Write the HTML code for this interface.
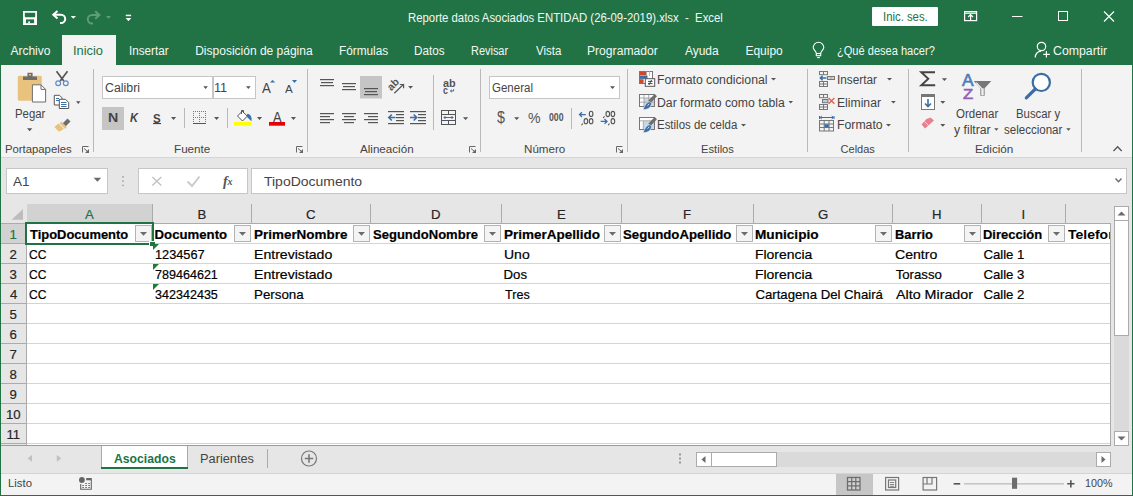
<!DOCTYPE html>
<html><head><meta charset="utf-8"><style>
html,body{margin:0;padding:0;width:1133px;height:496px;overflow:hidden;background:#fff;}
body{position:relative;font-family:"Liberation Sans",sans-serif;}
.a{position:absolute;box-sizing:border-box;}
.t{position:absolute;white-space:pre;transform-origin:0 0;}
.s{-webkit-text-stroke:0.2px currentColor;}
svg{position:absolute;overflow:visible;}
</style></head><body>
<!-- backgrounds -->
<div class="a" style="left:0;top:0;width:1133px;height:65px;background:#217346"></div>
<div class="a" style="left:62px;top:35px;width:54px;height:30px;background:#f3f3f3"></div>
<div class="a" style="left:0;top:65px;width:1133px;height:92px;background:#f3f3f3"></div>
<div class="a" style="left:0;top:157px;width:1133px;height:1px;background:#d5d5d5"></div>
<div class="a" style="left:0;top:158px;width:1133px;height:287px;background:#e6e6e6"></div>
<!-- formula bar boxes -->
<div class="a" style="left:6px;top:168px;width:102px;height:26px;background:#fff;border:1px solid #c6c6c6"></div>
<div class="a" style="left:138px;top:168px;width:110px;height:26px;background:#fff;border:1px solid #c6c6c6"></div>
<div class="a" style="left:251px;top:168px;width:876px;height:26px;background:#fff;border:1px solid #c6c6c6"></div>
<!-- grid -->
<div class="a" style="left:27px;top:224px;width:1083px;height:220px;background:#fff"></div>
<!-- sheet tabs + status -->
<div class="a" style="left:0;top:444px;width:1111px;height:1px;background:#9b9b9b"></div>
<div class="a" style="left:0;top:473px;width:1133px;height:22px;background:#f3f3f3"></div>
<div class="a" style="left:0;top:473px;width:1133px;height:1px;background:#d4d4d4"></div>
<svg style="left:0;top:0" width="1133" height="496" viewBox="0 0 1133 496">
<!-- ===== title bar ===== -->
<rect x="23" y="11" width="14" height="14" fill="#fff"/>
<path d="M24.8 12.8 H35.2 V16.6 L34.6 17.2 H25.4 L24.8 16.6 Z" fill="#217346"/>
<rect x="25.9" y="19.4" width="8.2" height="3.8" fill="#217346"/>
<rect x="28.2" y="21.4" width="1.8" height="1.8" fill="#fff"/>
<!-- undo -->
<g fill="none" stroke="#fff" stroke-width="2">
  <path d="M53 14.7 H61 A4.2 4.2 0 0 1 61 23.1 H60"/>
  <path d="M57.5 11 L53.3 14.7 L57.5 18.4" stroke-linejoin="miter"/>
</g>
<path d="M70.7 16 H76 L73.35 18.8 Z" fill="#fff"/>
<!-- redo faded -->
<g fill="none" stroke="#5d9e77" stroke-width="2">
  <path d="M99.5 15 H92 A4.2 4.2 0 0 0 92 23.4 H93"/>
  <path d="M95.2 11.3 L99.4 15 L95.2 18.7"/>
</g>
<path d="M106 16 H111 L108.5 18.8 Z" fill="#5d9e77"/>
<!-- customize -->
<rect x="125.8" y="14.7" width="5.3" height="1.5" fill="#fff"/>
<path d="M125.6 18 H131.3 L128.45 21.2 Z" fill="#fff"/>
<!-- sign in box -->
<rect x="872" y="7" width="66" height="19" rx="1" fill="#fff"/>
<!-- ribbon display options -->
<g fill="none" stroke="#fff" stroke-width="1.2">
  <rect x="964.6" y="11.6" width="12" height="9"/>
  <path d="M964.6 13.2 H976.6"/>
  <path d="M970.6 20.5 V14.8 M968.2 17 L970.6 14.6 L973 17"/>
</g>
<path d="M1012 16.5 H1022.5" stroke="#fff" stroke-width="1"/>
<rect x="1058.5" y="11.5" width="9" height="9" fill="none" stroke="#fff" stroke-width="1"/>
<path d="M1104 11.5 L1114 21.5 M1114 11.5 L1104 21.5" stroke="#fff" stroke-width="1.1"/>
<!-- lightbulb -->
<g fill="none" stroke="#fff" stroke-width="1.1">
  <path d="M816.3 53.2 C816 50.8 813.2 49.8 813.2 47.6 A5.3 5.3 0 0 1 823.8 47.6 C823.8 49.8 821 50.8 820.7 53.2"/>
  <rect x="816.3" y="53.5" width="4.4" height="2.2"/>
  <path d="M817.2 57.6 H819.8"/>
</g>
<!-- person -->
<g fill="none" stroke="#fff" stroke-width="1.2">
  <circle cx="1041.5" cy="46.5" r="4.2"/>
  <path d="M1035.2 57.5 C1035.5 53.5 1038 51.5 1041 51.2"/>
  <path d="M1046.4 51 V57.5 M1043.2 54.3 H1049.8"/>
</g>
<!-- formula bar extras -->
<path d="M93.6 177.8 H101.2 L97.4 181.8 Z" fill="#6b6b6b"/>
<g fill="#a6a6a6"><rect x="122.2" y="176" width="1.6" height="1.6"/><rect x="122.2" y="180.3" width="1.6" height="1.6"/><rect x="122.2" y="184.6" width="1.6" height="1.6"/></g>
<path d="M152.3 177 L161.3 185.5 M161.3 177 L152.3 185.5" stroke="#c0c0c0" stroke-width="1.3"/>
<path d="M187.5 181.5 L192 186 L199.5 176.5" fill="none" stroke="#cbcbcb" stroke-width="2"/>
<text x="223" y="185.6" font-family="Liberation Serif" font-style="italic" font-weight="bold" font-size="14" fill="#555">f</text>
<text x="227.6" y="185.4" font-family="Liberation Serif" font-style="italic" font-weight="bold" font-size="10" fill="#555">x</text>
<path d="M1115.5 178.5 L1118.5 181.8 L1121.5 178.5" fill="none" stroke="#6b6b6b" stroke-width="1.4"/>
<!-- ===== ribbon: clipboard ===== -->
<rect x="102.5" y="76.5" width="110" height="22" fill="#fff" stroke="#c6c6c6"/>
<rect x="213.5" y="76.5" width="42" height="22" fill="#fff" stroke="#c6c6c6"/>
<rect x="489.5" y="76.5" width="130" height="22" fill="#fff" stroke="#c6c6c6"/>

<rect x="17.8" y="75.8" width="24" height="25" rx="1.5" fill="#e9c37e"/>
<path d="M23 76.5 H37 V80 H23 Z M27.5 72.8 H32.6 V76.6 H27.5 Z" fill="#6d6d6d"/>
<rect x="29" y="74" width="2" height="1.5" fill="#e9c37e"/>
<path d="M32.4 84.8 H41 L45.6 89.4 V102 H32.4 Z" fill="#fff" stroke="#6d6d6d" stroke-width="1"/>
<path d="M41 84.8 V89.4 H45.6" fill="none" stroke="#6d6d6d" stroke-width="1"/>
<!-- scissors -->
<g fill="none" stroke="#555" stroke-width="1.7">
  <path d="M56.5 71.3 L63.8 81 M67.5 71.3 L60.2 81"/>
</g>
<g fill="none" stroke="#5b8ccb" stroke-width="1.2">
  <circle cx="58.2" cy="83.2" r="2.4"/>
  <circle cx="65.8" cy="83.2" r="2.4"/>
</g>
<!-- copy -->
<g fill="#fff" stroke="#555" stroke-width="1">
  <path d="M54.3 95.3 H59.5 L62 97.8 V105 H54.3 Z"/>
  <path d="M59.3 99.3 H65.5 L68.7 102.5 V108.5 H59.3 Z"/>
</g>
<g stroke="#3c6ea5" stroke-width="1">
  <path d="M61 102.5 H66.5 M61 104.5 H66.5 M61 106.5 H66.5"/>
  <path d="M56 98.5 H59 M56 100.5 H59"/>
</g>
<!-- format painter -->
<path d="M62.5 123.5 L67.5 118.5 L70.5 121.5 L65.5 126.5 Z" fill="#6d6d6d"/>
<path d="M58.5 123.5 L64 129 L59 131.8 L54.3 127 Z" fill="#e9c37e"/>
<path d="M60.5 122.5 L66 128" stroke="#e9c37e" stroke-width="2.5"/>
<!-- dropdown triangles (ribbon) -->
<g fill="#555">
  <path d="M27 128.3 H32.3 L29.65 131.2 Z"/>
  <path d="M76 101.3 H80.5 L78.25 104 Z"/>
  <path d="M203.3 86.3 H207.9 L205.6 89 Z"/>
  <path d="M246 86.3 H250.7 L248.35 89 Z"/>
  <path d="M171 117 H176.1 L173.55 119.9 Z"/>
  <path d="M214.1 116.9 H219.1 L216.6 119.9 Z"/>
  <path d="M257 116.9 H262.1 L259.55 119.9 Z"/>
  <path d="M290.9 116.9 H296 L293.45 119.9 Z"/>
  <path d="M408.1 86 H413 L410.55 88.8 Z"/>
  <path d="M463 117.2 H468.2 L465.6 120 Z"/>
  <path d="M610 86.3 H615 L612.5 89 Z"/>
  <path d="M514.1 117.2 H519.3 L516.7 120.1 Z"/>
  <path d="M771 78 H776 L773.5 80.6 Z"/>
  <path d="M788.5 101 H793 L790.75 103.6 Z"/>
  <path d="M741 124 H746 L743.5 126.6 Z"/>
  <path d="M887 78 H892 L889.5 80.6 Z"/>
  <path d="M891 101 H895.8 L893.4 103.6 Z"/>
  <path d="M886 124 H891 L888.5 126.6 Z"/>
  <path d="M941.9 78.2 H947 L944.45 81.1 Z"/>
  <path d="M940.3 101 H945.3 L942.8 103.7 Z"/>
  <path d="M940.3 124 H945.3 L942.8 126.7 Z"/>
  <path d="M994.2 128.3 H998.5 L996.35 130.8 Z"/>
  <path d="M1066.2 128.3 H1070.7 L1068.45 130.8 Z"/>
</g>
<!-- group separators -->
<g fill="#b9b9b9">
  <rect x="93" y="69" width="1" height="83"/>
  <rect x="307" y="69" width="1" height="83"/>
  <rect x="480" y="69" width="1" height="83"/>
  <rect x="627" y="69" width="1" height="83"/>
  <rect x="807" y="69" width="1" height="83"/>
  <rect x="908" y="69" width="1" height="83"/>
  <rect x="1081" y="69" width="1" height="83"/>
  <rect x="184" y="108" width="1" height="20"/>
  <rect x="227" y="108" width="1" height="20"/>
  <rect x="433" y="75" width="1" height="55"/>
  <rect x="571" y="108" width="1" height="21"/>
</g>
<!-- dialog launchers -->
<path d="M82.5 152.5 V146.5 H88.5" fill="none" stroke="#666" stroke-width="1"/>
<path d="M84.0 148.5 L87.0 151" stroke="#666" stroke-width="1"/>
<path d="M89.0 149 V153 H85.0 Z" fill="#666"/>
<path d="M296.5 152.5 V146.5 H302.5" fill="none" stroke="#666" stroke-width="1"/>
<path d="M298.0 148.5 L301.0 151" stroke="#666" stroke-width="1"/>
<path d="M303.0 149 V153 H299.0 Z" fill="#666"/>
<path d="M469.5 152.5 V146.5 H475.5" fill="none" stroke="#666" stroke-width="1"/>
<path d="M471.0 148.5 L474.0 151" stroke="#666" stroke-width="1"/>
<path d="M476.0 149 V153 H472.0 Z" fill="#666"/>
<path d="M616.5 152.5 V146.5 H622.5" fill="none" stroke="#666" stroke-width="1"/>
<path d="M618.0 148.5 L621.0 151" stroke="#666" stroke-width="1"/>
<path d="M623.0 149 V153 H619.0 Z" fill="#666"/>
<path d="M1113.5 151 L1117.6 146.8 L1121.7 151" fill="none" stroke="#555" stroke-width="1.3"/>
<!-- ===== font group ===== -->
<rect x="102" y="107" width="22" height="23" fill="#c5c5c5"/>
<path d="M269.9 82.6 L272.55 80 L275.2 82.6 Z" fill="#3c6ea5"/>
<path d="M292 80 H297 L294.5 82.9 Z" fill="#3c6ea5"/>
<!-- borders icon -->
<g fill="#777">
  <path d="M193 111 h1 v1 h-1z M195 111 h1 v1 h-1z M197 111 h1 v1 h-1z M199 111 h1 v1 h-1z M201 111 h1 v1 h-1z M203 111 h1 v1 h-1z M205 111 h1 v1 h-1z"/>
  <path d="M193 117 h1 v1 h-1z M195 117 h1 v1 h-1z M197 117 h1 v1 h-1z M199 117 h1 v1 h-1z M201 117 h1 v1 h-1z M203 117 h1 v1 h-1z M205 117 h1 v1 h-1z"/>
  <path d="M193 113 h1 v1 h-1z M193 115 h1 v1 h-1z M193 119 h1 v1 h-1z M193 121 h1 v1 h-1z"/>
  <path d="M199 113 h1 v1 h-1z M199 115 h1 v1 h-1z M199 119 h1 v1 h-1z M199 121 h1 v1 h-1z"/>
  <path d="M205 113 h1 v1 h-1z M205 115 h1 v1 h-1z M205 119 h1 v1 h-1z M205 121 h1 v1 h-1z"/>
</g>
<rect x="193" y="123" width="13" height="1" fill="#555"/>
<rect x="153" y="123" width="8" height="1.1" fill="#444"/>
<!-- fill color -->
<path d="M237.5 116 L242.3 111.2 L247.3 116.2 L242.5 121 Z" fill="#fff" stroke="#555" stroke-width="1"/>
<path d="M241.5 114 V110.5 H243.5 V113" fill="none" stroke="#555" stroke-width="1"/>
<path d="M247.3 113.8 C250.3 114 252.2 117 251.4 121.2 L246.8 116.8 Z" fill="#3c6ea5"/>
<rect x="234" y="122" width="17.2" height="3.7" fill="#ffff00"/>
<rect x="269" y="122" width="16" height="3.7" fill="#e60000"/>
<!-- ===== alignment ===== -->
<rect x="360" y="76" width="22" height="22.5" fill="#c5c5c5"/>
<g fill="#555">
  <rect x="320" y="79" width="14" height="1.2"/><rect x="321" y="82" width="12" height="1.2"/><rect x="320" y="85" width="14" height="1.2"/>
  <rect x="342" y="83" width="14" height="1.2"/><rect x="343" y="86" width="12" height="1.2"/><rect x="342" y="89" width="14" height="1.2"/>
  <rect x="364" y="88" width="14" height="1.2"/><rect x="365" y="91" width="12" height="1.2"/><rect x="364" y="94" width="14" height="1.2"/>
  <!-- left center right -->
  <rect x="320" y="113" width="14" height="1.2"/><rect x="320" y="116" width="10" height="1.2"/><rect x="320" y="119" width="14" height="1.2"/><rect x="320" y="122" width="10" height="1.2"/>
  <rect x="342" y="113" width="14" height="1.2"/><rect x="344" y="116" width="10" height="1.2"/><rect x="342" y="119" width="14" height="1.2"/><rect x="344" y="122" width="10" height="1.2"/>
  <rect x="364" y="113" width="14" height="1.2"/><rect x="368" y="116" width="10" height="1.2"/><rect x="364" y="119" width="14" height="1.2"/><rect x="368" y="122" width="10" height="1.2"/>
  <!-- indents -->
  <rect x="388" y="111" width="16" height="1.2"/><rect x="396" y="114" width="8" height="1.2"/><rect x="396" y="117" width="8" height="1.2"/><rect x="396" y="120" width="8" height="1.2"/><rect x="388" y="123" width="16" height="1.2"/>
  <rect x="410" y="111" width="16" height="1.2"/><rect x="418" y="114" width="8" height="1.2"/><rect x="418" y="117" width="8" height="1.2"/><rect x="418" y="120" width="8" height="1.2"/><rect x="410" y="123" width="16" height="1.2"/>
</g>
<g fill="none" stroke="#3c6ea5" stroke-width="1.6">
  <path d="M389 117.5 H395.5 M391.8 114.5 L388.8 117.5 L391.8 120.5"/>
  <path d="M410 117.5 H416.5 M413.7 114.5 L416.7 117.5 L413.7 120.5"/>
</g>
<!-- orientation -->
<path d="M394.3 93.3 L403.6 84.3 M399.8 84.5 H403.6 V88.3" fill="none" stroke="#555" stroke-width="1.2"/>
<text x="0" y="0" font-family="Liberation Sans" font-size="10.5" font-weight="bold" fill="#555" text-anchor="middle" transform="translate(393 84.3) rotate(-45) translate(0 3.6)">ab</text>
<path d="M453.6 89.2 V91 H450.6 M451.9 89.8 L450.4 91 L451.9 92.2" fill="none" stroke="#3c6ea5" stroke-width="1"/>
<!-- merge -->
<g fill="none" stroke="#555" stroke-width="1">
  <rect x="441.5" y="110.5" width="14" height="14"/>
  <path d="M441.5 114.5 H455.5 M441.5 120.5 H455.5 M448.5 110.5 V114.5 M448.5 120.5 V124.5"/>
</g>
<path d="M444 117.5 H453 M445.5 116 L444 117.5 L445.5 119 M451.5 116 L453 117.5 L451.5 119" fill="none" stroke="#3c6ea5" stroke-width="1"/>
<!-- ===== number ===== -->
<g fill="none" stroke="#3c6ea5" stroke-width="1.3">
  <path d="M579.5 114.6 H585.8 M582 112.3 L579.5 114.6 L582 117"/>
  <path d="M600.7 121.4 H607 M604.5 119.1 L607 121.4 L604.5 123.8"/>
</g>
<g fill="none" stroke="#555" stroke-width="1.1">
  <ellipse cx="591.1" cy="113.9" rx="1.8" ry="2.6"/>
  <ellipse cx="585.9" cy="121.2" rx="1.8" ry="2.6"/>
  <ellipse cx="591.1" cy="121.2" rx="1.8" ry="2.6"/>
  <ellipse cx="607.8" cy="114" rx="1.8" ry="2.6"/>
  <ellipse cx="612.9" cy="114" rx="1.8" ry="2.6"/>
  <ellipse cx="612.9" cy="121.2" rx="1.8" ry="2.6"/>
  <path d="M582.8 123.5 L581.5 125.3 M604.5 116.3 L603.2 118 M609.5 123.5 L608.2 125.3"/>
</g>
<!-- ===== styles ===== -->
<!-- conditional formatting -->
<g>
  <rect x="639.5" y="71.5" width="13" height="12" fill="#fff" stroke="#777" stroke-width="1"/>
  <path d="M646.5 71.5 V76 M649.5 71.5 V76" stroke="#bbb" stroke-width="1"/>
  <rect x="640" y="72" width="6.2" height="3.3" fill="#d24726"/>
  <rect x="640" y="75.6" width="7.5" height="3.3" fill="#3c6ea5"/>
  <rect x="640" y="79.2" width="3.6" height="3.8" fill="#d24726"/>
  <rect x="645.3" y="78.7" width="9.4" height="7.6" fill="#fff" stroke="#555" stroke-width="1"/>
  <path d="M648 81.4 H652.5 M648 83.6 H652.5 M651.6 80 L648.8 85" stroke="#333" stroke-width="0.9"/>
</g>
<!-- table format -->
<g>
  <rect x="639.5" y="94.5" width="15" height="12" fill="#fff" stroke="#777" stroke-width="1"/>
  <rect x="643.8" y="98.3" width="10.2" height="7.7" fill="#c9d6e5"/>
  <path d="M644 95 V106 M648.7 95 V106 M640 98 H654 M640 102.2 H654" stroke="#a8a8a8" stroke-width="1"/>
  <path d="M655.8 95.2 L649.5 101.8" stroke="#6d6d6d" stroke-width="3.2"/>
  <path d="M650.2 101.8 C648 101.6 645.5 103.5 643 109.6 C647.2 109.8 651 107.8 651.6 103.4 Z" fill="#3c6ea5" stroke="#f3f3f3" stroke-width="0.6"/>
  <path d="M647.5 105.6 L649.2 104" stroke="#fff" stroke-width="0.9"/>
</g>
<g>
  <rect x="639.5" y="117.5" width="15" height="12" fill="#fff" stroke="#777" stroke-width="1"/>
  <rect x="643.5" y="121" width="10.5" height="8" fill="#c9d6e5"/>
  <path d="M640 120.8 H654 M643.3 121 V129" stroke="#a8a8a8" stroke-width="1"/>
  <path d="M655.8 118.2 L649.5 124.8" stroke="#6d6d6d" stroke-width="3.2"/>
  <path d="M650.2 124.8 C648 124.6 645.5 126.5 643 132.6 C647.2 132.8 651 130.8 651.6 126.4 Z" fill="#3c6ea5" stroke="#f3f3f3" stroke-width="0.6"/>
  <path d="M647.5 128.6 L649.2 127" stroke="#fff" stroke-width="0.9"/>
</g>
<!-- ===== cells ===== -->
<g fill="none" stroke="#777" stroke-width="1">
  <rect x="819.5" y="71.5" width="8" height="3.2"/><path d="M823.5 71.5 V74.7"/>
  <rect x="819.5" y="81.5" width="8" height="5"/><path d="M823.5 81.5 V86.5 M819.5 84 H827.5"/>
  <rect x="827.5" y="76.5" width="7" height="3"/><path d="M831 76.5 V79.5"/>
  <rect x="819.5" y="94.5" width="8" height="3.2"/><path d="M823.5 94.5 V97.7"/>
  <rect x="819.5" y="104.5" width="8" height="5"/><path d="M823.5 104.5 V109.5 M819.5 107 H827.5"/>
  <rect x="819.5" y="120.5" width="14" height="10.5"/>
  <path d="M824.2 120.5 V131 M829 120.5 V131 M819.5 124 H833.5 M819.5 127.5 H833.5"/>
</g>
<rect x="828.2" y="77.2" width="2.5" height="1.6" fill="#c8c8c8"/><rect x="831.6" y="77.2" width="2.5" height="1.6" fill="#c8c8c8"/>
<path d="M826.5 78 H820.3 M822.6 75.7 L820.3 78 L822.6 80.3" fill="none" stroke="#3c6ea5" stroke-width="1.5"/>
<rect x="822.5" y="99.5" width="5.5" height="3.2" fill="#b9cde3" stroke="#777" stroke-width="1"/>
<path d="M828.6 98 L834.4 103.8 M834.4 98 L828.6 103.8" stroke="#e0664d" stroke-width="1.4"/>
<rect x="824.5" y="124.3" width="4.3" height="3" fill="#3c6ea5"/>
<path d="M820 117.5 H833.5 M821.8 116 L820 117.5 L821.8 119 M831.7 116 L833.5 117.5 L831.7 119 M819.5 116 V119 M834 116 V119" fill="none" stroke="#3c6ea5" stroke-width="1"/>
<!-- ===== editing ===== -->
<path d="M935 72.3 H921.3 L928.3 78.7 L921.3 85.2 H935.2" fill="none" stroke="#444" stroke-width="1.9" stroke-linejoin="miter"/>
<rect x="921.5" y="94.5" width="13" height="15" fill="#fff" stroke="#777" stroke-width="1"/>
<rect x="921" y="94" width="14" height="3" fill="#777"/>
<path d="M928 99 V106.5 M925 103.5 L928 106.5 L931 103.5" fill="none" stroke="#3c6ea5" stroke-width="1.6"/>
<path d="M926.5 119 L921.5 124.5 L925 128.5 L934 120.5 L930.5 117.5 Z" fill="#e8808f"/>
<path d="M924.5 121.5 L928.5 125.5" stroke="#f3f3f3" stroke-width="0.8"/>
<!-- sort filter -->
<path d="M973.8 81 H991.3 L984.6 88.3 V95.8 H980.4 V88.3 Z" fill="#777"/>
<path d="M976.3 82.6 L981.9 88.6 V94.6 H983.1 V88.3" fill="none" stroke="#fff" stroke-width="1.1"/>
<!-- magnifier -->
<circle cx="1041.3" cy="82.4" r="8.6" fill="#fff" stroke="#3c6ea5" stroke-width="2.2"/>
<path d="M1035.3 89 L1026.3 97.8" stroke="#3c6ea5" stroke-width="3.2" stroke-linecap="round"/>
</svg>

<!-- window border -->
<div class="a" style="left:0;top:65px;width:1px;height:431px;background:#217346"></div>
<div class="a" style="left:1132px;top:65px;width:1px;height:431px;background:#217346"></div>
<div class="a" style="left:0;top:495px;width:1133px;height:1px;background:#217346"></div>

<div class="a" style="left:1px;top:204px;width:1110px;height:19px;background:#e6e6e6;"></div>
<div class="a" style="left:27px;top:204px;width:125px;height:19px;background:#d2d2d2;"></div>
<div class="a" style="left:1px;top:223px;width:25px;height:222px;background:#e6e6e6;"></div>
<div class="a" style="left:1px;top:224px;width:25px;height:19px;background:#d2d2d2;"></div>
<div class="a" style="left:1px;top:223px;width:1110px;height:1px;background:#ababab;"></div>
<div class="a" style="left:152px;top:204px;width:1px;height:19px;background:#ababab;"></div>
<div class="a" style="left:251px;top:204px;width:1px;height:19px;background:#ababab;"></div>
<div class="a" style="left:370px;top:204px;width:1px;height:19px;background:#ababab;"></div>
<div class="a" style="left:501px;top:204px;width:1px;height:19px;background:#ababab;"></div>
<div class="a" style="left:621px;top:204px;width:1px;height:19px;background:#ababab;"></div>
<div class="a" style="left:753px;top:204px;width:1px;height:19px;background:#ababab;"></div>
<div class="a" style="left:892px;top:204px;width:1px;height:19px;background:#ababab;"></div>
<div class="a" style="left:981px;top:204px;width:1px;height:19px;background:#ababab;"></div>
<div class="a" style="left:1065px;top:204px;width:1px;height:19px;background:#ababab;"></div>
<div class="a" style="left:26px;top:223px;width:1px;height:222px;background:#ababab;"></div>
<div class="a" style="left:1px;top:243px;width:25px;height:1px;background:#ababab;"></div>
<div class="a" style="left:1px;top:263px;width:25px;height:1px;background:#ababab;"></div>
<div class="a" style="left:1px;top:283px;width:25px;height:1px;background:#ababab;"></div>
<div class="a" style="left:1px;top:303px;width:25px;height:1px;background:#ababab;"></div>
<div class="a" style="left:1px;top:323px;width:25px;height:1px;background:#ababab;"></div>
<div class="a" style="left:1px;top:343px;width:25px;height:1px;background:#ababab;"></div>
<div class="a" style="left:1px;top:363px;width:25px;height:1px;background:#ababab;"></div>
<div class="a" style="left:1px;top:383px;width:25px;height:1px;background:#ababab;"></div>
<div class="a" style="left:1px;top:403px;width:25px;height:1px;background:#ababab;"></div>
<div class="a" style="left:1px;top:423px;width:25px;height:1px;background:#ababab;"></div>
<div class="a" style="left:1px;top:443px;width:25px;height:1px;background:#ababab;"></div>
<div class="a" style="left:152px;top:224px;width:1px;height:220px;background:#d4d4d4;"></div>
<div class="a" style="left:251px;top:224px;width:1px;height:220px;background:#d4d4d4;"></div>
<div class="a" style="left:370px;top:224px;width:1px;height:220px;background:#d4d4d4;"></div>
<div class="a" style="left:501px;top:224px;width:1px;height:220px;background:#d4d4d4;"></div>
<div class="a" style="left:621px;top:224px;width:1px;height:220px;background:#d4d4d4;"></div>
<div class="a" style="left:753px;top:224px;width:1px;height:220px;background:#d4d4d4;"></div>
<div class="a" style="left:892px;top:224px;width:1px;height:220px;background:#d4d4d4;"></div>
<div class="a" style="left:981px;top:224px;width:1px;height:220px;background:#d4d4d4;"></div>
<div class="a" style="left:1065px;top:224px;width:1px;height:220px;background:#d4d4d4;"></div>
<div class="a" style="left:27px;top:224px;width:1083px;height:221px;background:#fff;"></div>
<div class="a" style="left:27px;top:243px;width:1083px;height:1px;background:#d4d4d4;"></div>
<div class="a" style="left:27px;top:263px;width:1083px;height:1px;background:#d4d4d4;"></div>
<div class="a" style="left:27px;top:283px;width:1083px;height:1px;background:#d4d4d4;"></div>
<div class="a" style="left:27px;top:303px;width:1083px;height:1px;background:#d4d4d4;"></div>
<div class="a" style="left:27px;top:323px;width:1083px;height:1px;background:#d4d4d4;"></div>
<div class="a" style="left:27px;top:343px;width:1083px;height:1px;background:#d4d4d4;"></div>
<div class="a" style="left:27px;top:363px;width:1083px;height:1px;background:#d4d4d4;"></div>
<div class="a" style="left:27px;top:383px;width:1083px;height:1px;background:#d4d4d4;"></div>
<div class="a" style="left:27px;top:403px;width:1083px;height:1px;background:#d4d4d4;"></div>
<div class="a" style="left:27px;top:423px;width:1083px;height:1px;background:#d4d4d4;"></div>
<div class="a" style="left:27px;top:443px;width:1083px;height:1px;background:#d4d4d4;"></div>
<div class="a" style="left:1110px;top:224px;width:1px;height:222px;background:#ababab;"></div>
<svg style="left:0;top:0" width="30" height="224"><path d="M11.5 219.7 L23 219.7 L23 208.9 Z" fill="#bdbdbd"/></svg>
<div class="a" style="left:135px;top:225px;width:17px;height:17px;background:#f4f4f4;border:1px solid #b3b3b3"></div>
<svg style="left:135px;top:225px" width="17" height="17"><path d="M5 7 H12 L8.5 10.7 Z" fill="#6b6b6b"/></svg>
<div class="a" style="left:234px;top:225px;width:17px;height:17px;background:#f4f4f4;border:1px solid #b3b3b3"></div>
<svg style="left:234px;top:225px" width="17" height="17"><path d="M5 7 H12 L8.5 10.7 Z" fill="#6b6b6b"/></svg>
<div class="a" style="left:353px;top:225px;width:17px;height:17px;background:#f4f4f4;border:1px solid #b3b3b3"></div>
<svg style="left:353px;top:225px" width="17" height="17"><path d="M5 7 H12 L8.5 10.7 Z" fill="#6b6b6b"/></svg>
<div class="a" style="left:484px;top:225px;width:17px;height:17px;background:#f4f4f4;border:1px solid #b3b3b3"></div>
<svg style="left:484px;top:225px" width="17" height="17"><path d="M5 7 H12 L8.5 10.7 Z" fill="#6b6b6b"/></svg>
<div class="a" style="left:604px;top:225px;width:17px;height:17px;background:#f4f4f4;border:1px solid #b3b3b3"></div>
<svg style="left:604px;top:225px" width="17" height="17"><path d="M5 7 H12 L8.5 10.7 Z" fill="#6b6b6b"/></svg>
<div class="a" style="left:736px;top:225px;width:17px;height:17px;background:#f4f4f4;border:1px solid #b3b3b3"></div>
<svg style="left:736px;top:225px" width="17" height="17"><path d="M5 7 H12 L8.5 10.7 Z" fill="#6b6b6b"/></svg>
<div class="a" style="left:875px;top:225px;width:17px;height:17px;background:#f4f4f4;border:1px solid #b3b3b3"></div>
<svg style="left:875px;top:225px" width="17" height="17"><path d="M5 7 H12 L8.5 10.7 Z" fill="#6b6b6b"/></svg>
<div class="a" style="left:964px;top:225px;width:17px;height:17px;background:#f4f4f4;border:1px solid #b3b3b3"></div>
<svg style="left:964px;top:225px" width="17" height="17"><path d="M5 7 H12 L8.5 10.7 Z" fill="#6b6b6b"/></svg>
<div class="a" style="left:1048px;top:225px;width:17px;height:17px;background:#f4f4f4;border:1px solid #b3b3b3"></div>
<svg style="left:1048px;top:225px" width="17" height="17"><path d="M5 7 H12 L8.5 10.7 Z" fill="#6b6b6b"/></svg>
<div class="a" style="left:25px;top:222px;width:129px;height:23px;border:2px solid #217346"></div>
<div class="a" style="left:149px;top:241px;width:6px;height:5px;background:#217346;border:1px solid #fff;border-right:none;border-bottom:none"></div>
<svg style="left:152px;top:244px" width="8" height="8"><path d="M1 0 H7 L1 6 Z" fill="#1e7b34"/></svg>
<svg style="left:152px;top:264px" width="8" height="8"><path d="M1 0 H7 L1 6 Z" fill="#1e7b34"/></svg>
<svg style="left:152px;top:284px" width="8" height="8"><path d="M1 0 H7 L1 6 Z" fill="#1e7b34"/></svg>
<div class="a" style="left:1px;top:446px;width:1131px;height:27px;background:#e6e6e6;"></div>
<div class="a" style="left:1111px;top:204px;width:21px;height:242px;background:#e6e6e6;"></div>
<div class="a" style="left:1114px;top:206px;width:15px;height:15px;background:#fff;border:1px solid #ababab"></div>
<svg style="left:1114px;top:206px" width="15" height="15"><path d="M3.5 9.5 H11.5 L7.5 5.5 Z" fill="#6b6b6b"/></svg>
<div class="a" style="left:1114px;top:220px;width:15px;height:211px;background:#dadada;"></div>
<div class="a" style="left:1114px;top:220px;width:15px;height:116px;background:#fff;border:1px solid #ababab"></div>
<div class="a" style="left:1114px;top:431px;width:15px;height:15px;background:#fff;border:1px solid #ababab"></div>
<svg style="left:1114px;top:431px" width="15" height="15"><path d="M3.5 5.5 H11.5 L7.5 9.5 Z" fill="#6b6b6b"/></svg>
<div class="a" style="left:1px;top:445px;width:1110px;height:1px;background:#9b9b9b;"></div>
<div class="a" style="left:101px;top:446px;width:87px;height:23px;background:#fff;border-left:1px solid #ababab;border-right:1px solid #ababab"></div>
<div class="a" style="left:101px;top:467px;width:87px;height:2px;background:#217346;"></div>
<div class="a" style="left:267px;top:449px;width:1px;height:19px;background:#ababab;"></div>
<svg style="left:0;top:440px" width="400" height="40"><path d="M32 15 L27.5 18.3 L32 21.7 Z M56.8 15 L61.3 18.3 L56.8 21.7 Z" fill="#c0c0c0"/><circle cx="309" cy="18.5" r="7.5" fill="none" stroke="#777" stroke-width="1.2"/><path d="M309 14.3 V22.7 M304.8 18.5 H313.2" stroke="#777" stroke-width="1.6"/></svg>
<svg style="left:678px;top:452px" width="6" height="14"><rect x="1" y="1.5" width="2" height="2" fill="#999"/><rect x="1" y="5.5" width="2" height="2" fill="#999"/><rect x="1" y="9.5" width="2" height="2" fill="#999"/></svg>
<div class="a" style="left:696px;top:452px;width:400px;height:15px;background:#dadada;"></div>
<div class="a" style="left:696px;top:452px;width:16px;height:15px;background:#fff;border:1px solid #ababab"></div>
<div class="a" style="left:711px;top:452px;width:66px;height:15px;background:#fff;border:1px solid #ababab"></div>
<div class="a" style="left:1096px;top:452px;width:15px;height:15px;background:#fff;border:1px solid #ababab"></div>
<svg style="left:696px;top:452px" width="16" height="15"><path d="M9.5 4 L5.5 7.5 L9.5 11 Z" fill="#6b6b6b"/></svg>
<svg style="left:1096px;top:452px" width="15" height="15"><path d="M5.5 4 L9.5 7.5 L5.5 11 Z" fill="#6b6b6b"/></svg>
<div class="a" style="left:1px;top:473px;width:1131px;height:1px;background:#d4d4d4;"></div>
<div class="a" style="left:1px;top:474px;width:1131px;height:21px;background:#f3f3f3;"></div>
<div class="a" style="left:836px;top:474px;width:37px;height:21px;background:#c6c6c6;"></div>
<svg style="left:0;top:470px" width="1133" height="26">
<circle cx="81.9" cy="10" r="2.9" fill="#666"/>
<rect x="86.2" y="8" width="5.6" height="2.3" fill="#666"/>
<path d="M80.7 14 V19.2 H91.3 V10" fill="none" stroke="#666" stroke-width="1.1"/>
<g fill="#666">
<rect x="85.3" y="13" width="1.6" height="1"/><rect x="88.3" y="13" width="1.6" height="1"/>
<rect x="82.3" y="15" width="1.6" height="1"/><rect x="85.3" y="15" width="1.6" height="1"/><rect x="88.3" y="15" width="1.6" height="1"/>
<rect x="82.3" y="17" width="1.6" height="1"/><rect x="85.3" y="17" width="1.6" height="1"/><rect x="88.3" y="17" width="1.6" height="1"/>
</g>
<rect x="847.5" y="7.5" width="12.5" height="12.5" fill="#d0d0d0" stroke="#6d6d6d" stroke-width="1.3"/>
<path d="M851.7 7.5 V20 M855.8 7.5 V20 M847.5 11.7 H860 M847.5 15.8 H860" stroke="#6d6d6d" stroke-width="1.2"/>
<g fill="none" stroke="#777" stroke-width="1.2">
<rect x="885.6" y="7.5" width="13" height="12.5"/>
<rect x="888.5" y="10" width="7.2" height="7.5"/>
<rect x="923.1" y="7.5" width="13.5" height="12.5"/>
<path d="M927 7.5 V14 H932 V7.5 M923.1 14 H927"/>
</g>
<g fill="#777"><rect x="890" y="12" width="4.2" height="0.9"/><rect x="890" y="14" width="4.2" height="0.9"/><rect x="890" y="15.8" width="4.2" height="0.9"/></g>
<rect x="953.6" y="13" width="6.6" height="1.6" fill="#555"/>
<rect x="964" y="13.5" width="100" height="0.8" fill="#999"/>
<rect x="1012" y="7.7" width="5.1" height="11.1" fill="#6d6d6d"/>
<path d="M1067.2 13.8 H1074.5 M1070.85 10.2 V17.4" stroke="#555" stroke-width="1.6"/>
</svg>
<div class="t" style="left:408.05px;top:11.70px;font-size:12px;line-height:12px;font-weight:400;color:#f4f8f5;transform:scaleX(0.946);">Reporte datos Asociados ENTIDAD (26-09-2019).xlsx  -  Excel</div><div class="t" style="left:882.56px;top:10.80px;font-size:12px;line-height:12px;font-weight:400;color:#217346;transform:scaleX(0.944);">Inic. ses.</div><div class="t" style="left:10.40px;top:44.50px;font-size:12px;line-height:12px;font-weight:400;color:#f4f8f5;">Archivo</div><div class="t" style="left:128.83px;top:44.50px;font-size:12px;line-height:12px;font-weight:400;color:#f4f8f5;transform:scaleX(0.975);">Insertar</div><div class="t" style="left:195.21px;top:44.50px;font-size:12px;line-height:12px;font-weight:400;color:#f4f8f5;">Disposición de página</div><div class="t" style="left:338.52px;top:44.50px;font-size:12px;line-height:12px;font-weight:400;color:#f4f8f5;transform:scaleX(0.984);">Fórmulas</div><div class="t" style="left:414.43px;top:44.50px;font-size:12px;line-height:12px;font-weight:400;color:#f4f8f5;transform:scaleX(0.973);">Datos</div><div class="t" style="left:471.49px;top:44.50px;font-size:12px;line-height:12px;font-weight:400;color:#f4f8f5;transform:scaleX(0.912);">Revisar</div><div class="t" style="left:535.90px;top:44.50px;font-size:12px;line-height:12px;font-weight:400;color:#f4f8f5;transform:scaleX(0.958);">Vista</div><div class="t" style="left:586.99px;top:44.50px;font-size:12px;line-height:12px;font-weight:400;color:#f4f8f5;transform:scaleX(1.010);">Programador</div><div class="t" style="left:684.90px;top:44.50px;font-size:12px;line-height:12px;font-weight:400;color:#f4f8f5;">Ayuda</div><div class="t" style="left:745.40px;top:44.50px;font-size:12px;line-height:12px;font-weight:400;color:#f4f8f5;">Equipo</div><div class="t" style="left:837.08px;top:44.50px;font-size:12px;line-height:12px;font-weight:400;color:#f4f8f5;transform:scaleX(0.922);">¿Qué desea hacer?</div><div class="t" style="left:1053.38px;top:44.50px;font-size:12px;line-height:12px;font-weight:400;color:#f4f8f5;transform:scaleX(1.025);">Compartir</div><div class="t" style="left:72.63px;top:44.50px;font-size:12px;line-height:12px;font-weight:400;color:#217346;transform:scaleX(1.070);">Inicio</div><div class="t" style="left:14.55px;top:108.20px;font-size:12px;line-height:12px;font-weight:400;color:#444444;transform:scaleX(0.948);">Pegar</div><div class="t" style="left:4.77px;top:143.80px;font-size:11px;line-height:11px;font-weight:400;color:#444444;transform:scaleX(1.028);">Portapapeles</div><div class="t" style="left:104.67px;top:82.20px;font-size:12px;line-height:12px;font-weight:400;color:#444444;transform:scaleX(1.031);">Calibri</div><div class="t" style="left:214.35px;top:82.20px;font-size:12px;line-height:12px;font-weight:400;color:#444444;transform:scaleX(1.055);">11</div><div class="t" style="left:173.54px;top:143.80px;font-size:11px;line-height:11px;font-weight:400;color:#444444;transform:scaleX(1.061);">Fuente</div><div class="t" style="left:359.60px;top:143.80px;font-size:11px;line-height:11px;font-weight:400;color:#444444;transform:scaleX(1.056);">Alineación</div><div class="t" style="left:491.54px;top:82.10px;font-size:12px;line-height:12px;font-weight:400;color:#444444;transform:scaleX(0.959);">General</div><div class="t" style="left:524.34px;top:143.80px;font-size:11px;line-height:11px;font-weight:400;color:#444444;transform:scaleX(1.055);">Número</div><div class="t" style="left:657.28px;top:73.70px;font-size:12px;line-height:12px;font-weight:400;color:#444444;transform:scaleX(1.023);">Formato condicional</div><div class="t" style="left:657.28px;top:96.60px;font-size:12px;line-height:12px;font-weight:400;color:#444444;transform:scaleX(1.019);">Dar formato como tabla</div><div class="t" style="left:657.34px;top:119.40px;font-size:12px;line-height:12px;font-weight:400;color:#444444;transform:scaleX(0.955);">Estilos de celda</div><div class="t" style="left:700.78px;top:143.80px;font-size:11px;line-height:11px;font-weight:400;color:#444444;transform:scaleX(1.016);">Estilos</div><div class="t" style="left:836.72px;top:73.70px;font-size:12px;line-height:12px;font-weight:400;color:#444444;transform:scaleX(0.982);">Insertar</div><div class="t" style="left:837.29px;top:96.60px;font-size:12px;line-height:12px;font-weight:400;color:#444444;transform:scaleX(1.014);">Eliminar</div><div class="t" style="left:837.28px;top:119.40px;font-size:12px;line-height:12px;font-weight:400;color:#444444;transform:scaleX(1.021);">Formato</div><div class="t" style="left:840.60px;top:143.80px;font-size:11px;line-height:11px;font-weight:400;color:#444444;">Celdas</div><div class="t" style="left:955.50px;top:107.80px;font-size:12px;line-height:12px;font-weight:400;color:#444444;transform:scaleX(0.959);">Ordenar</div><div class="t" style="left:954.00px;top:124.00px;font-size:12px;line-height:12px;font-weight:400;color:#444444;transform:scaleX(1.019);">y filtrar</div><div class="t" style="left:1015.55px;top:107.80px;font-size:12px;line-height:12px;font-weight:400;color:#444444;transform:scaleX(0.946);">Buscar y</div><div class="t" style="left:1004.30px;top:124.00px;font-size:12px;line-height:12px;font-weight:400;color:#444444;transform:scaleX(0.961);">seleccionar</div><div class="t" style="left:975.34px;top:143.80px;font-size:11px;line-height:11px;font-weight:400;color:#444444;transform:scaleX(1.063);">Edición</div><div class="t" style="left:13.00px;top:175.90px;font-size:12px;line-height:12px;font-weight:400;color:#444444;transform:scaleX(1.121);">A1</div><div class="t" style="left:263.50px;top:175.70px;font-size:12px;line-height:12px;font-weight:400;color:#444444;transform:scaleX(1.164);">TipoDocumento</div><div class="t s" style="left:85.00px;top:208.00px;font-size:13.2px;line-height:13.2px;font-weight:400;color:#217346;">A</div><div class="t s" style="left:197.50px;top:208.00px;font-size:13.2px;line-height:13.2px;font-weight:400;color:#262626;">B</div><div class="t s" style="left:306.00px;top:208.00px;font-size:13.2px;line-height:13.2px;font-weight:400;color:#262626;">C</div><div class="t s" style="left:431.00px;top:208.00px;font-size:13.2px;line-height:13.2px;font-weight:400;color:#262626;">D</div><div class="t s" style="left:557.00px;top:208.00px;font-size:13.2px;line-height:13.2px;font-weight:400;color:#262626;">E</div><div class="t s" style="left:683.00px;top:208.00px;font-size:13.2px;line-height:13.2px;font-weight:400;color:#262626;">F</div><div class="t s" style="left:818.00px;top:208.00px;font-size:13.2px;line-height:13.2px;font-weight:400;color:#262626;">G</div><div class="t s" style="left:932.00px;top:208.00px;font-size:13.2px;line-height:13.2px;font-weight:400;color:#262626;">H</div><div class="t s" style="left:1021.50px;top:208.00px;font-size:13.2px;line-height:13.2px;font-weight:400;color:#262626;">I</div><div class="t s" style="left:9.50px;top:228.00px;font-size:13.2px;line-height:13.2px;font-weight:400;color:#217346;">1</div><div class="t s" style="left:9.50px;top:248.00px;font-size:13.2px;line-height:13.2px;font-weight:400;color:#262626;">2</div><div class="t s" style="left:9.50px;top:268.00px;font-size:13.2px;line-height:13.2px;font-weight:400;color:#262626;">3</div><div class="t s" style="left:10.00px;top:288.00px;font-size:13.2px;line-height:13.2px;font-weight:400;color:#262626;">4</div><div class="t s" style="left:9.50px;top:308.00px;font-size:13.2px;line-height:13.2px;font-weight:400;color:#262626;">5</div><div class="t s" style="left:9.50px;top:328.00px;font-size:13.2px;line-height:13.2px;font-weight:400;color:#262626;">6</div><div class="t s" style="left:9.50px;top:348.00px;font-size:13.2px;line-height:13.2px;font-weight:400;color:#262626;">7</div><div class="t s" style="left:9.50px;top:368.00px;font-size:13.2px;line-height:13.2px;font-weight:400;color:#262626;">8</div><div class="t s" style="left:9.50px;top:388.00px;font-size:13.2px;line-height:13.2px;font-weight:400;color:#262626;">9</div><div class="t s" style="left:6.00px;top:408.00px;font-size:13.2px;line-height:13.2px;font-weight:400;color:#262626;">10</div><div class="t s" style="left:6.50px;top:428.00px;font-size:13.2px;line-height:13.2px;font-weight:400;color:#262626;">11</div><div class="t s" style="left:29.50px;top:228.00px;font-size:13.2px;line-height:13.2px;font-weight:700;color:#000;transform:scaleX(0.981);">TipoDocumento</div><div class="t s" style="left:154.60px;top:228.00px;font-size:13.2px;line-height:13.2px;font-weight:700;color:#000;">Documento</div><div class="t s" style="left:253.58px;top:228.00px;font-size:13.2px;line-height:13.2px;font-weight:700;color:#000;transform:scaleX(1.020);">PrimerNombre</div><div class="t s" style="left:372.51px;top:228.00px;font-size:13.2px;line-height:13.2px;font-weight:700;color:#000;transform:scaleX(0.988);">SegundoNombre</div><div class="t s" style="left:503.58px;top:228.00px;font-size:13.2px;line-height:13.2px;font-weight:700;color:#000;transform:scaleX(1.023);">PrimerApellido</div><div class="t s" style="left:623.00px;top:228.00px;font-size:13.2px;line-height:13.2px;font-weight:700;color:#000;">SegundoApellido</div><div class="t s" style="left:755.37px;top:228.00px;font-size:13.2px;line-height:13.2px;font-weight:700;color:#000;transform:scaleX(1.033);">Municipio</div><div class="t s" style="left:894.73px;top:228.00px;font-size:13.2px;line-height:13.2px;font-weight:700;color:#000;transform:scaleX(0.973);">Barrio</div><div class="t s" style="left:983.42px;top:228.00px;font-size:13.2px;line-height:13.2px;font-weight:700;color:#000;transform:scaleX(0.984);">Dirección</div><div class="t s" style="left:28.59px;top:248.00px;font-size:13.2px;line-height:13.2px;font-weight:400;color:#000;transform:scaleX(0.912);">CC</div><div class="t s" style="left:154.63px;top:248.00px;font-size:13.2px;line-height:13.2px;font-weight:400;color:#000;transform:scaleX(0.966);">1234567</div><div class="t s" style="left:253.53px;top:248.00px;font-size:13.2px;line-height:13.2px;font-weight:400;color:#000;transform:scaleX(1.068);">Entrevistado</div><div class="t s" style="left:503.54px;top:248.00px;font-size:13.2px;line-height:13.2px;font-weight:400;color:#000;transform:scaleX(1.061);">Uno</div><div class="t s" style="left:755.34px;top:248.00px;font-size:13.2px;line-height:13.2px;font-weight:400;color:#000;transform:scaleX(1.057);">Florencia</div><div class="t s" style="left:894.63px;top:248.00px;font-size:13.2px;line-height:13.2px;font-weight:400;color:#000;transform:scaleX(1.068);">Centro</div><div class="t s" style="left:983.39px;top:248.00px;font-size:13.2px;line-height:13.2px;font-weight:400;color:#000;">Calle 1</div><div class="t s" style="left:28.59px;top:268.00px;font-size:13.2px;line-height:13.2px;font-weight:400;color:#000;transform:scaleX(0.912);">CC</div><div class="t s" style="left:154.65px;top:268.00px;font-size:13.2px;line-height:13.2px;font-weight:400;color:#000;transform:scaleX(0.952);">789464621</div><div class="t s" style="left:253.53px;top:268.00px;font-size:13.2px;line-height:13.2px;font-weight:400;color:#000;transform:scaleX(1.068);">Entrevistado</div><div class="t s" style="left:503.60px;top:268.00px;font-size:13.2px;line-height:13.2px;font-weight:400;color:#000;">Dos</div><div class="t s" style="left:755.34px;top:268.00px;font-size:13.2px;line-height:13.2px;font-weight:400;color:#000;transform:scaleX(1.057);">Florencia</div><div class="t s" style="left:895.70px;top:268.00px;font-size:13.2px;line-height:13.2px;font-weight:400;color:#000;">Torasso</div><div class="t s" style="left:983.39px;top:268.00px;font-size:13.2px;line-height:13.2px;font-weight:400;color:#000;">Calle 3</div><div class="t s" style="left:28.59px;top:288.00px;font-size:13.2px;line-height:13.2px;font-weight:400;color:#000;transform:scaleX(0.912);">CC</div><div class="t s" style="left:154.65px;top:288.00px;font-size:13.2px;line-height:13.2px;font-weight:400;color:#000;transform:scaleX(0.952);">342342435</div><div class="t s" style="left:253.59px;top:288.00px;font-size:13.2px;line-height:13.2px;font-weight:400;color:#000;transform:scaleX(1.012);">Persona</div><div class="t s" style="left:504.60px;top:288.00px;font-size:13.2px;line-height:13.2px;font-weight:400;color:#000;transform:scaleX(0.954);">Tres</div><div class="t s" style="left:755.40px;top:288.00px;font-size:13.2px;line-height:13.2px;font-weight:400;color:#000;">Cartagena Del Chairá</div><div class="t s" style="left:895.70px;top:288.00px;font-size:13.2px;line-height:13.2px;font-weight:400;color:#000;transform:scaleX(1.083);">Alto Mirador</div><div class="t s" style="left:983.39px;top:288.00px;font-size:13.2px;line-height:13.2px;font-weight:400;color:#000;">Calle 2</div><div class="t" style="left:113.60px;top:452.90px;font-size:12.5px;line-height:12.5px;font-weight:700;color:#217346;transform:scaleX(0.976);">Asociados</div><div class="t" style="left:200.38px;top:452.90px;font-size:12.5px;line-height:12.5px;font-weight:400;color:#444;transform:scaleX(1.022);">Parientes</div><div class="t" style="left:8.47px;top:478.00px;font-size:11px;line-height:11px;font-weight:400;color:#444;transform:scaleX(1.032);">Listo</div><div class="t" style="left:1085.02px;top:477.80px;font-size:11px;line-height:11px;font-weight:400;color:#444;transform:scaleX(0.978);">100%</div><div class="t" style="left:107.61px;top:112.00px;font-size:12px;line-height:12px;font-weight:700;color:#444;transform:scale(1.186,1.000);">N</div><div class="t" style="left:130.20px;top:112.00px;font-size:12px;line-height:12px;font-weight:700;color:#444;font-style:italic;transform:scale(0.922,1.000);">K</div><div class="t" style="left:152.74px;top:111.94px;font-size:12px;line-height:12px;font-weight:700;color:#444;transform:scale(0.957,1.056);">S</div><div class="t" style="left:262.30px;top:80.74px;font-size:13px;line-height:13px;font-weight:400;color:#444;transform:scale(1.022,1.078);">A</div><div class="t" style="left:285.10px;top:83.71px;font-size:11px;line-height:11px;font-weight:400;color:#444;transform:scale(1.057,0.987);">A</div><div class="t" style="left:272.70px;top:109.82px;font-size:13px;line-height:13px;font-weight:400;color:#444;transform:scale(0.989,1.089);">A</div><div class="t" style="left:442.90px;top:78.80px;font-size:10px;line-height:10px;font-weight:700;color:#555;transform:scaleX(1.082);">ab</div><div class="t" style="left:443.00px;top:84.80px;font-size:10.5px;line-height:10.5px;font-weight:700;color:#555;transform:scaleX(0.850);">c</div><div class="t" style="left:496.70px;top:109.30px;font-size:15px;line-height:15px;font-weight:400;color:#555;transform:scale(0.950,1.100);">$</div><div class="t" style="left:528.40px;top:111.14px;font-size:14px;line-height:14px;font-weight:400;color:#555;transform:scale(1.008,1.030);">%</div><div class="t" style="left:548.70px;top:113.18px;font-size:9px;line-height:9px;font-weight:700;color:#555;transform:scale(0.967,1.117);">000</div><div class="t" style="left:962.10px;top:71.64px;font-size:14px;line-height:14px;font-weight:400;color:#4a7ebb;transform:scale(1.244,1.180);-webkit-text-stroke:0.5px currentColor;">A</div><div class="t" style="left:963.00px;top:86.18px;font-size:14px;line-height:14px;font-weight:400;color:#8e5fb4;transform:scale(1.200,1.110);-webkit-text-stroke:0.5px currentColor;">Z</div>
<div class="a" style="left:1066px;top:224px;width:44px;height:19px;overflow:hidden"><div class="t" style="left:2px;top:4px;font-size:13.2px;line-height:13.2px;font-weight:700;color:#000;transform:scaleX(1.06)">Telefono</div></div>
</body></html>
